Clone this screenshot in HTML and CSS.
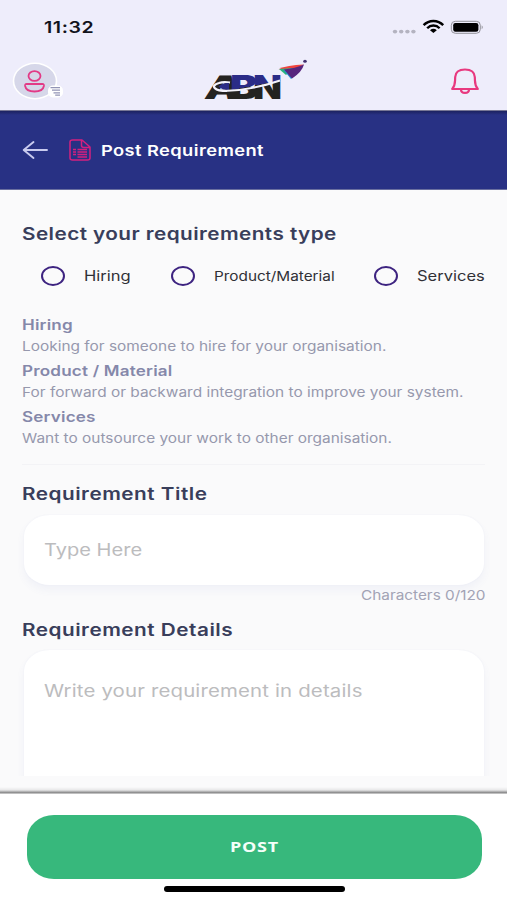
FILE: index.html
```
<!DOCTYPE html>
<html lang="en">
<head>
<meta charset="utf-8">
<title>Post Requirement</title>
<link rel="stylesheet" href="styles.css">
</head>
<body>
<div class="screen">
  <header class="top">
    <div class="status">
      <span class="time">11:32</span>
      <svg class="status-icons" width="92" height="18" viewBox="0 0 92 18">
        <g fill="#b4b3c0"><ellipse cx="3" cy="13.6" rx="2.2" ry="1.9"/><ellipse cx="9.2" cy="13.6" rx="2.2" ry="1.9"/><ellipse cx="15.4" cy="13.6" rx="2.2" ry="1.9"/><ellipse cx="21.4" cy="13.6" rx="2.2" ry="1.9"/></g>
        <g fill="none" stroke="#000" stroke-width="2.4">
          <path d="M31.6 7.2C37 1.5 45.8 1.5 51.2 7.2"/>
          <path d="M35.2 10.2C38.6 6.6 44.2 6.6 47.6 10.2"/>
        </g>
        <path d="M38 12.200Q41.400 9.300 44.800 12.200L41.400 15Z"/>
        <rect x="59.300" y="3.300" width="29" height="12" rx="4" fill="none" stroke="#929199"/>
        <rect x="61.200" y="5" width="25.200" height="8.800" rx="2.200"/>
        <path d="M89.700 7.300Q91.800 9.300 89.700 11.300Z" fill="#929199"/>
      </svg>
    </div>
    <div class="brand-row">
      <svg class="profile" width="54" height="42" viewBox="0 0 54 42">
        <ellipse cx="23" cy="21" rx="22.300" ry="18.500" fill="#fff"/>
        <ellipse cx="23" cy="21" rx="20.700" ry="16.900" fill="#d6d7e9"/>
        <g fill="none" stroke="#e23a86" stroke-width="1.800">
          <ellipse cx="22.500" cy="16" rx="6" ry="4.900"/>
          <path d="M14.600 24H30.400Q32.200 24 31.900 26C31.200 29.800 27.500 31.500 22.500 31.500S13.800 29.800 13.100 26Q12.800 24 14.600 24Z"/>
        </g>
        <rect x="36" y="25.500" width="15" height="12" rx="5" fill="#fff"/>
        <path d="M38.500 27.600H48M40 30.200H48M41.500 32.800H48M43.200 35.200H48" stroke="#9294b5" stroke-width="1.300"/>
      </svg>
      <svg class="logo" width="110" height="56" viewBox="0 -6 110 56">
        <defs>
          <linearGradient id="ink" gradientUnits="userSpaceOnUse" x1="50" y1="16" x2="54.600" y2="39.600">
            <stop offset=".46" stop-color="#2b2c87"/><stop offset=".47" stop-color="#242321"/>
          </linearGradient>
        </defs>
        <g class="logo-text">
          <text x="0" y="0" transform="translate(3.500 40) skewX(-11)" textLength="35" lengthAdjust="spacingAndGlyphs" fill="#242321">A</text>
          <text x="30" y="40" textLength="28" lengthAdjust="spacingAndGlyphs" fill="url(#ink)">B</text>
          <text x="53" y="40" textLength="29" lengthAdjust="spacingAndGlyphs" fill="url(#ink)">N</text>
        </g>
        <path d="M27 32C15 32 9 27 19 24Q23 22.500 30 23.500" fill="none" stroke="#f4f3fc" stroke-width="2.200"/>
        <path d="M18.500 27.500Q22 23.500 29 24V31Q22 31 18.500 27.500Z" fill="#2b2c87"/>
        <path d="M24 32Q53 31 80 21.500" fill="none" stroke="#f4f3fc" stroke-width="1.900"/>
        <path d="M78.500 10.200Q87 6 104 5.500L96 10Z" fill="#f0443e"/>
        <path d="M79 10L86 16L94 9Z" fill="#28b37c"/>
        <path d="M83.500 11L91 20L95 16.500L94 9Z" fill="#248ed0"/>
        <path d="M84 10.500Q95 9.500 104 5.500Q102 13 92 19.500Z" fill="#57257d"/>
        <ellipse cx="105" cy="2.300" rx="1.800" ry="1.500" fill="#41306e"/>
      </svg>
      <svg class="bell" width="30" height="28" viewBox="0 0 30 28" fill="none" stroke="#e8397f" stroke-width="2.200" stroke-linejoin="round">
        <path d="M2.200 22C5.800 18 4.800 15.500 5.200 10C5.500 5 9.500 2.500 15 2.500S24.500 5 24.800 10C25.200 15.500 24.200 18 27.800 22Z"/>
        <path d="M11 22.500C11 27 19 27 19 22.500"/>
      </svg>
    </div>
  </header>

  <nav class="titlebar">
    <svg class="back" width="27" height="20" viewBox="0 0 27 20" fill="none" stroke="#c9cbef" stroke-width="1.900" stroke-linecap="round" stroke-linejoin="round"><path d="M25 10H1.700M11.500 2L1.700 10L11.500 18"/></svg>
    <svg class="doc" width="22" height="22" viewBox="0 0 22 22" fill="none" stroke="#d3207f" stroke-width="1.500" stroke-linejoin="round">
      <path d="M3.500 1H13L21 8V19Q21 21 18.500 21H3.500Q1 21 1 19V3Q1 1 3.500 1ZM12.500 1V6.500Q12.500 8.500 15 8.500H21"/>
      <path d="M4 10.500H7M8.500 10.500H18M4 13H7M8.500 13H18M4 15.500H7M8.500 15.500H18M8.500 18H18" stroke-width="1.300"/>
    </svg>
    <h1 class="title">Post Requirement</h1>
  </nav>

  <main class="content">
    <h2 class="heading">Select your requirements type</h2>
    <div class="options">
      <label class="option"><i class="radio"></i><span class="option-text">Hiring</span></label>
      <label class="option"><i class="radio"></i><span class="option-text small">Product/Material</span></label>
      <label class="option"><i class="radio"></i><span class="option-text">Services</span></label>
    </div>
    <dl class="help">
      <dt>Hiring</dt>
      <dd>Looking for someone to hire for your organisation.</dd>
      <dt>Product / Material</dt>
      <dd>For forward or backward integration to improve your system.</dd>
      <dt>Services</dt>
      <dd>Want to outsource your work to other organisation.</dd>
    </dl>
    <h2 class="label">Requirement Title</h2>
    <div class="field"><span class="hint">Type Here</span></div>
    <p class="counter">Characters 0/120</p>
    <h2 class="label">Requirement Details</h2>
    <div class="field area"><span class="hint long">Write your requirement in details</span></div>
  </main>

  <footer class="footer">
    <div class="post"><span class="post-text">POST</span></div>
    <div class="home"></div>
  </footer>
</div>
</body>
</html>
```
FILE: styles.css
```
* { box-sizing: border-box; margin: 0; padding: 0; }

body {
  font-family: Inter, "Liberation Sans", sans-serif;
  background: #fafafb;
}

.screen {
  width: 507px;
  height: 900px;
  display: flex;
  flex-direction: column;
  overflow: hidden;
}

/* Wide lettering: every text run is stretched from its left edge */
.time, .title, .heading, .label, .option-text, dt, dd, .hint, .counter {
  transform-origin: 0 50%;
  transform: scaleX(1.22);
  white-space: nowrap;
  width: max-content;
}

.top { height: 110px; background: #eeedfb; }
.status {
  height: 54px;
  padding: 0 23px 0 44px;
  display: flex;
  justify-content: space-between;
  align-items: center;
}
.time { font-size: 16px; font-weight: 600; color: #12121c; letter-spacing: .5px; }
.status-icons { display: block; }
.brand-row {
  height: 56px;
  padding: 0 27px 3px 12px;
  display: flex;
  align-items: center;
}
.profile { flex: none; }
.logo { flex: none; margin-left: 133.500px; }
.logo-text { font: 900 32.500px/1 Inter, sans-serif; }
.bell { flex: none; margin-left: auto; }

.titlebar {
  height: 80px;
  padding-left: 22px;
  background: linear-gradient(#1c2260, #283184 4px);
  border-top: 1px solid #777795;
  border-bottom: 1px solid #6a6f9f;
  display: flex;
  align-items: center;
}
.doc { margin-left: 20px; }
.title { margin-left: 10px; color: #fff; font-size: 15px; font-weight: 600; letter-spacing: .33px; }

.content {
  height: 586px;
  padding: 29px 22px 0;
  overflow: hidden;
}
.heading, .label { font-size: 17px; font-weight: 600; line-height: 30px; color: #393e5b; }
.heading { letter-spacing: .35px; }
.label { letter-spacing: .41px; }

.options { height: 54px; display: grid; grid-template-columns: 130px 203px 1fr; padding-left: 19px; }
.option { display: flex; align-items: center; height: 54px; }
.radio { flex: none; width: 24px; height: 20px; border: 2px solid #3d2380; border-radius: 50%; margin-right: 19px; }
.option-text { font-size: 14px; line-height: 18px; color: #303036; transform: scaleX(1.18); }
.option-text.small { font-size: 13px; }

.help { height: 162px; padding-top: 11px; border-bottom: 1px solid #f3f3f6; }
dt, dd { height: 23px; line-height: 22px; }
dt { font-size: 14px; font-weight: 600; color: #8588aa; letter-spacing: .15px; }
dd { font-size: 13px; line-height: 19px; color: #9698ad; transform: scaleX(1.186); }

.label { margin-top: 14px; }
.field {
  width: 460px;
  height: 70px;
  margin: 6px 0 0 2px;
  padding-left: 20px;
  background: #fff;
  border-radius: 26px / 21px;
  box-shadow: 0 5px 9px rgba(90, 110, 180, .06), 0 0 2px rgba(90, 110, 180, .06);
}
.hint { display: block; font-size: 17px; line-height: 70px; color: #bcbcbe; transform: scaleX(1.18); }
.hint.long { transform: scaleX(1.2); letter-spacing: .13px; line-height: 83px; }
.counter {
  height: 20px;
  line-height: 20px;
  margin-left: auto;
  margin-right: -1px;
  font-size: 13px;
  color: #a2a3b5;
  transform: scaleX(1.18);
  transform-origin: 100% 50%;
}
.counter + .label { margin-top: 10px; }
.area { height: 127px; margin-top: 5px; border-bottom-left-radius: 0; border-bottom-right-radius: 0; }

.footer {
  height: 124px;
  margin-top: auto;
  padding-top: 39px;
  background: linear-gradient(#fafafb 11px, #e8e8e9 14px, #7f7f80 17px, #fff 18px);
}
.post {
  width: 455px;
  height: 64px;
  margin-left: 26.500px;
  padding-bottom: 2px;
  border-radius: 27px / 24px;
  background: #37b87c;
  display: flex;
  align-items: center;
  justify-content: center;
}
.post-text { color: #f4fff9; font: 700 15px "Open Sans", sans-serif; letter-spacing: .6px; transform: scaleX(1.2); }
.home { width: 181px; height: 6px; margin: 7px 0 0 164px; border-radius: 3px; background: #000; }
```
